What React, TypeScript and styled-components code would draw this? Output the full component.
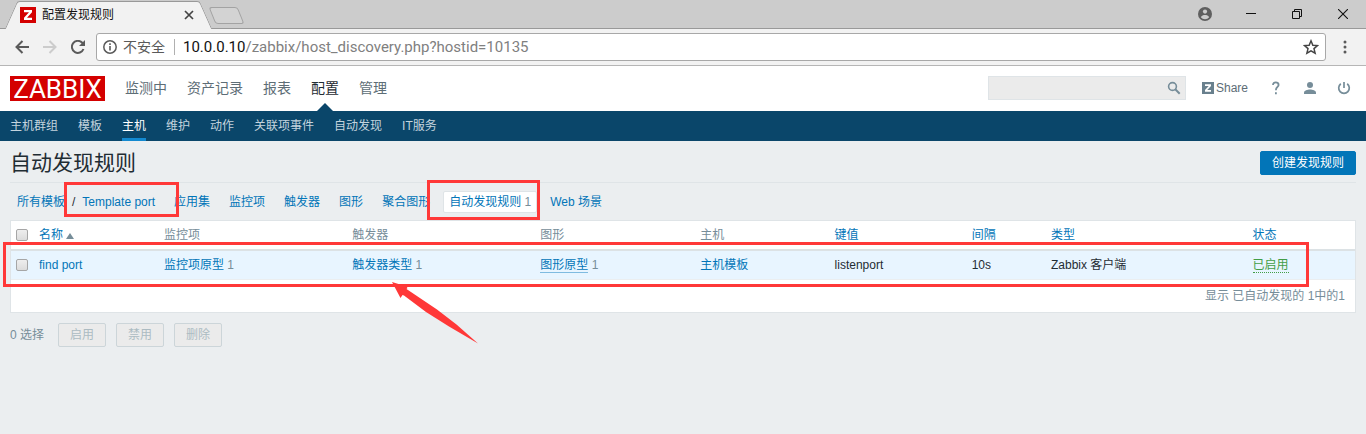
import React from "react";
import styled, { createGlobalStyle, css } from "styled-components";

const GlobalStyle = createGlobalStyle`
  * { box-sizing: border-box; }
  html { background: #ebeef0; }
  body {
    margin: 0;
    color: #1f2c33;
    font: 12px/16px "Liberation Sans", "Noto Sans CJK SC", sans-serif;
  }
  a { color: #0275b8; text-decoration: none; }
  button, input { font: inherit; }
  ul { list-style: none; margin: 0; padding: 0; }
`;

const Screen = styled.div`
  position: relative;
`;

/* ---- browser window ---- */

const TabStrip = styled.div`
  display: flex;
  align-items: flex-end;
  height: 29px;
  padding-left: 11px;
  background: #ccc;
  border-bottom: 1px solid #999;
`;

const BrowserTab = styled.div`
  position: relative;
  z-index: 0;
  display: flex;
  align-items: center;
  width: 195px;
  height: 28px;
  margin-bottom: -1px;
  padding: 0 12px 0 9px;
  color: #111;

  &::before,
  &::after {
    content: "";
    position: absolute;
    z-index: -1;
    top: 0;
    bottom: 0;
    width: 60%;
    background: #f2f2f2;
    border-top: 1px solid #999;
  }
  &::before {
    left: 0;
    border-left: 1px solid #999;
    border-top-left-radius: 3px;
    transform: skewX(-24deg);
  }
  &::after {
    right: 0;
    border-right: 1px solid #999;
    border-top-right-radius: 3px;
    transform: skewX(24deg);
  }
`;

const TabTitle = styled.span`
  flex: 1;
  margin-left: 6px;
`;

const PlainButton = styled.button`
  display: flex;
  align-items: center;
  justify-content: center;
  padding: 0;
  border: 0;
  background: none;
  color: inherit;
`;

const NewTab = styled.button`
  width: 29px;
  height: 17px;
  margin: 0 0 4px 6px;
  padding: 0;
  border: 1px solid #a3a3a3;
  border-radius: 3px;
  background: #d3d3d3;
  transform: skewX(22deg);
`;

const WindowControls = styled.div`
  display: flex;
  align-self: stretch;
  align-items: center;
  margin-left: auto;
  color: #111;

  button { width: 46px; height: 26px; }
`;

const Toolbar = styled.div`
  display: flex;
  align-items: center;
  height: 37px;
  padding: 0 14px 0 13px;
  background: #f2f2f2;
  border-bottom: 1px solid #b6b6b6;
  color: #5a5a5a;
`;

const NavButtons = styled.div`
  display: flex;
  gap: 10px;
  margin-right: 9px;

  button { width: 18px; }
  button:disabled { color: #ccc; }
`;

const AddressBar = styled.div`
  flex: 1;
  display: flex;
  align-items: center;
  height: 28px;
  margin-right: 12px;
  padding: 0 6px;
  border: 1px solid #a8a8a8;
  border-radius: 3px;
  background: #fff;
  font: 14px/18px Roboto, "Noto Sans CJK SC", sans-serif;
`;

const Security = styled.span`
  margin: 0 8px 0 6px;
  padding-right: 9px;
  border-right: 1px solid #b0b0b0;
  line-height: 16px;
`;

const Url = styled.div`
  flex: 1;
  color: #808080;
  font-size: 15px;

  b { color: #111; font-weight: 400; }
`;

const MenuButton = styled(PlainButton)`
  width: 14px;
`;

/* ---- page header ---- */

const Header = styled.header`
  display: flex;
  align-items: center;
  height: 45px;
  padding: 0 10px;
  background: #fff;
`;

const Logo = styled.a`
  width: 95px;
  height: 25px;
  background: #d40000;
  color: #fff;
  font-family: Roboto, sans-serif;
  font-size: 26px;
  line-height: 26px;
  text-align: center;
`;

const MainMenu = styled.ul`
  display: flex;
  gap: 20px;
  margin-left: 20px;
  align-self: stretch;
  font-size: 14px;
`;

const MainItem = styled.li<{ $active?: boolean }>`
  position: relative;
  line-height: 44px;

  a { color: ${(p) => (p.$active ? "#1f2c33" : "#5d6d76")}; }

  ${(p) =>
    p.$active &&
    css`
      &::after {
        content: "";
        position: absolute;
        left: 50%;
        bottom: 0;
        margin-left: -8px;
        border: 8px solid transparent;
        border-top: 0;
        border-bottom-color: #0a466a;
      }
    `}
`;

const HeaderTools = styled.div`
  display: flex;
  align-self: stretch;
  align-items: center;
  margin-left: auto;
  padding-bottom: 1px;
  color: #768d99;
`;

const SearchForm = styled.form`
  display: flex;
  align-items: center;
  width: 198px;
  height: 24px;
  margin-right: 16px;
  padding-right: 4px;
  border: 1px solid #dfe4e7;
  background: #ebebeb;
  color: #768d99;

  input {
    flex: 1;
    min-width: 0;
    height: 22px;
    border: 0;
    background: none;
  }
`;

const ShareLink = styled.a`
  display: flex;
  align-items: center;
  gap: 2px;
  margin-right: 19px;
  color: #5d6d76;
`;

const ToolLinks = styled.div`
  display: flex;
  align-items: center;
  gap: 16px;
  margin-right: 3px;
`;

const ToolLink = styled.a`
  display: flex;
  justify-content: center;
  width: 18px;
  color: #768d99;
`;

const SubMenu = styled.ul`
  display: flex;
  gap: 20px;
  height: 30px;
  padding: 0 10px;
  background: #0a466a;
`;

const SubItem = styled.li<{ $active?: boolean }>`
  border-bottom: 3px solid ${(p) => (p.$active ? "#1389d0" : "transparent")};
  line-height: 30px;

  a { color: ${(p) => (p.$active ? "#fff" : "#c4d4de")}; }
`;

/* ---- page body ---- */

const Page = styled.main`
  padding: 0 10px;
`;

const TitleRow = styled.div`
  display: flex;
  align-items: center;
  justify-content: space-between;
  height: 42px;
  padding-top: 2px;
  border-bottom: 1px solid #dfe4e7;

  h1 {
    margin: 0;
    font-size: 21px;
    font-weight: 400;
    line-height: 28px;
  }
`;

const Button = styled.button`
  height: 24px;
  padding: 0 11px;
  border: 1px solid #0275b8;
  border-radius: 2px;
  background: #0275b8;
  color: #fff;
  line-height: 22px;

  &:disabled {
    border-color: #ccd5d9;
    background: #ebebeb;
    color: #acbbc2;
  }
`;

const Filters = styled.nav`
  display: flex;
  align-items: center;
  gap: 7px;
  height: 37px;
  padding-left: 1px;
`;

const Crumbs = styled.span`
  display: flex;
  gap: 7px;
  padding: 0 6px;
`;

const Filter = styled.span<{ $active?: boolean }>`
  padding: 2px 5px;
  border: 1px solid ${(p) => (p.$active ? "#dfe4e7" : "transparent")};
  border-radius: 2px;
  background: ${(p) => (p.$active ? "#fff" : "none")};
  color: #768d99;
`;

const Count = styled.span`
  color: #768d99;
`;

const DataTable = styled.table`
  width: 100%;
  table-layout: fixed;
  border: 1px solid #dfe4e7;
  border-spacing: 0;
  background: #fff;

  th, td {
    height: 28px;
    padding: 0 5px;
    text-align: left;
    font-weight: 400;
    white-space: nowrap;
  }
  th {
    height: 30px;
    border-bottom: 2px solid #dce2e5;
    color: #768d99;
  }
  tbody td {
    height: 29px;
    border-bottom: 1px solid #ebeef0;
    background: #e8f5ff;
  }
  tfoot td {
    height: 32px;
    padding-right: 10px;
    text-align: right;
    color: #768d99;
  }
`;

const Check = styled.input.attrs({ type: "checkbox" })`
  appearance: none;
  display: block;
  width: 12px;
  height: 12px;
  margin: 0;
  border: 1px solid #a6a6a6;
  border-radius: 2px;
  background: linear-gradient(#eee, #dcdcdc);
`;

const SortArrow = styled.span`
  display: inline-block;
  margin-left: 3px;
  border: 4px solid transparent;
  border-top: 0;
  border-bottom: 6px solid #768d99;
`;

const HoverLink = styled.a`
  border-bottom: 1px solid #7fbbe0;
`;

const StatusLink = styled.a`
  border-bottom: 1px dotted #429e47;
  color: #429e47;
`;

const ActionRow = styled.div`
  display: flex;
  align-items: center;
  gap: 10px;
  padding: 10px 0;
  color: #768d99;

  span { margin-right: 4px; }
`;

/* ---- red annotations lying over the page ---- */

const Mark = styled.div`
  position: absolute;
  border: 3px solid #ff3838;
  pointer-events: none;
`;
const CrumbMark = styled(Mark)`
  left: 64px;
  top: 182px;
  width: 115px;
  height: 35px;
`;
const FilterMark = styled(Mark)`
  left: 427px;
  top: 180px;
  width: 113px;
  height: 40px;
`;
const RowMark = styled(Mark)`
  left: 3px;
  right: 57px;
  top: 242px;
  height: 45px;
`;
const Arrow = styled.svg`
  position: absolute;
  left: 392px;
  top: 282px;
  pointer-events: none;
`;

const columns = [
  { label: "监控项", width: "14%" },
  { label: "触发器", width: "14%" },
  { label: "图形", width: "11.9%" },
  { label: "主机", width: "10%" },
  { label: "键值", width: "10.2%", sortable: true },
  { label: "间隔", width: "5.9%", sortable: true },
  { label: "类型", width: "15%", sortable: true },
  { label: "状态", width: "auto", sortable: true },
];
const mainMenu = ["监测中", "资产记录", "报表", "配置", "管理"];
const subMenu = ["主机群组", "模板", "主机", "维护", "动作", "关联项事件", "自动发现", "IT服务"];
const filters = ["应用集", "监控项", "触发器", "图形", "聚合图形"];

const ZIcon = ({ size, color }: { size: number; color: string }) => (
  <svg width={size} height={size} viewBox="0 0 16 16" aria-hidden="true">
    <path fill={color} d="M0 0h16v16H0z" />
    <path fill="#fff" d="M4 3h8v2.2L7 10.8h5V13H4v-2.2l5-5.6H4z" />
  </svg>
);

const Browser = () => (
  <>
    <TabStrip>
      <BrowserTab>
        <ZIcon size={16} color="#d40000" />
        <TabTitle>配置发现规则</TabTitle>
        <PlainButton aria-label="关闭标签页">
          <svg width="10" height="10" viewBox="0 0 10 10" stroke="#444" strokeWidth="1.7">
            <path d="M1 1l8 8M9 1L1 9" />
          </svg>
        </PlainButton>
      </BrowserTab>
      <NewTab aria-label="新标签页" />
      <WindowControls>
        <PlainButton aria-label="用户">
          <svg width="14" height="14" viewBox="0 0 14 14">
            <circle cx="7" cy="7" r="7" fill="#5f5f5f" />
            <circle cx="7" cy="4.6" r="2.1" fill="#ccc" />
            <path d="M2.8 10.2C3.4 8.6 5.5 8 7 8s3.6.6 4.2 2.2A5.3 5.3 0 0 1 7 12.3a5.3 5.3 0 0 1-4.2-2.1z" fill="#ccc" />
          </svg>
        </PlainButton>
        <PlainButton aria-label="最小化">
          <svg width="10" height="10" viewBox="0 0 10 10" fill="none" stroke="currentColor">
            <path d="M0 4.5h10" />
          </svg>
        </PlainButton>
        <PlainButton aria-label="还原">
          <svg width="10" height="10" viewBox="0 0 10 10" fill="none" stroke="currentColor">
            <path d="M.5 2.5h7v7h-7zM2.5 2.5v-2h7v7h-2" />
          </svg>
        </PlainButton>
        <PlainButton aria-label="关闭">
          <svg width="10" height="10" viewBox="0 0 10 10" fill="none" stroke="currentColor" strokeWidth="1.1">
            <path d="M0 0l10 10M10 0L0 10" />
          </svg>
        </PlainButton>
      </WindowControls>
    </TabStrip>
    <Toolbar>
      <NavButtons>
        <PlainButton aria-label="后退">
          <svg width="14" height="14" viewBox="0 0 14 14" fill="none" stroke="currentColor" strokeWidth="2">
            <path d="M14 7H1.5M7.5 1L1.5 7l6 6" />
          </svg>
        </PlainButton>
        <PlainButton aria-label="前进" disabled>
          <svg width="14" height="14" viewBox="0 0 14 14" fill="none" stroke="currentColor" strokeWidth="2">
            <path d="M0 7h12.5M6.5 1l6 6-6 6" />
          </svg>
        </PlainButton>
        <PlainButton aria-label="重新加载">
          <svg width="14" height="14" viewBox="0 0 14 14" fill="none" stroke="currentColor" strokeWidth="2">
            <path d="M12.5 9A6 6 0 1 1 11.3 2.8L12 3.5" />
            <path d="M14 0v6H8z" fill="currentColor" stroke="none" />
          </svg>
        </PlainButton>
      </NavButtons>
      <AddressBar>
        <svg width="14" height="14" viewBox="0 0 14 14" fill="none" stroke="currentColor">
          <circle cx="7" cy="7" r="6.2" strokeWidth="1.5" />
          <path d="M7 6v4.5M7 3.3v1.6" strokeWidth="1.6" />
        </svg>
        <Security>不安全</Security>
        <Url>
          <b>10.0.0.10</b>/zabbix/host_discovery.php?hostid=10135
        </Url>
        <PlainButton aria-label="收藏">
          <svg width="16" height="16" viewBox="0 0 14 14" fill="none" stroke="#444" strokeWidth="1.3">
            <path d="M7 1.6l1.6 3.8 4.1.3-3.1 2.7 1 4L7 10.3l-3.6 2.1 1-4-3.1-2.7 4.1-.3z" />
          </svg>
        </PlainButton>
      </AddressBar>
      <MenuButton aria-label="菜单">
        <svg width="4" height="14" viewBox="0 0 4 14" fill="#5a5a5a">
          <circle cx="2" cy="2" r="1.5" />
          <circle cx="2" cy="7" r="1.5" />
          <circle cx="2" cy="12" r="1.5" />
        </svg>
      </MenuButton>
    </Toolbar>
  </>
);

const SiteHeader = () => (
  <>
    <Header>
      <Logo href="#">ZABBIX</Logo>
      <MainMenu>
        {mainMenu.map((m) => (
          <MainItem key={m} $active={m === "配置"}>
            <a href="#">{m}</a>
          </MainItem>
        ))}
      </MainMenu>
      <HeaderTools>
        <SearchForm>
          <input type="text" aria-label="搜索" />
          <PlainButton type="button" aria-label="搜索">
            <svg width="14" height="14" viewBox="0 0 14 14" fill="none" stroke="currentColor">
              <circle cx="5.5" cy="5.5" r="3.9" strokeWidth="1.6" />
              <path d="M8.3 8.3l4.4 4.4" strokeWidth="2" />
            </svg>
          </PlainButton>
        </SearchForm>
        <ShareLink href="#">
          <ZIcon size={12} color="#69808d" />
          Share
        </ShareLink>
        <ToolLinks>
          <ToolLink href="#" aria-label="帮助">
            <svg width="8" height="14" viewBox="0 0 8 14" fill="none" stroke="currentColor" strokeWidth="1.8">
              <path d="M1 4C1 2 2.2 1.4 3.8 1.4S6.6 2.2 6.6 3.9C6.6 6 3.9 6 3.9 9.2M3.9 11.2v2" />
            </svg>
          </ToolLink>
          <ToolLink href="#" aria-label="用户资料">
            <svg width="12" height="12" viewBox="0 0 12 12" fill="currentColor">
              <circle cx="6" cy="3" r="3" />
              <path d="M0 12v-1.5C0 8.5 3.5 7.5 6 7.5s6 1 6 3V12z" />
            </svg>
          </ToolLink>
          <ToolLink href="#" aria-label="退出">
            <svg width="14" height="14" viewBox="0 0 14 14" fill="none" stroke="currentColor" strokeWidth="1.7">
              <path d="M7 1v6M3.8 2.8a5.3 5.3 0 1 0 6.4 0" />
            </svg>
          </ToolLink>
        </ToolLinks>
      </HeaderTools>
    </Header>
    <SubMenu>
      {subMenu.map((m) => (
        <SubItem key={m} $active={m === "主机"}>
          <a href="#">{m}</a>
        </SubItem>
      ))}
    </SubMenu>
  </>
);

const RulesTable = () => (
  <DataTable>
    <colgroup>
      <col style={{ width: 23 }} />
      <col style={{ width: "9.3%" }} />
      {columns.map((c) => (
        <col key={c.label} style={{ width: c.width }} />
      ))}
    </colgroup>
    <thead>
      <tr>
        <th>
          <Check aria-label="全选" />
        </th>
        <th>
          <a href="#">
            名称
            <SortArrow />
          </a>
        </th>
        {columns.map((c) => (
          <th key={c.label}>{c.sortable ? <a href="#">{c.label}</a> : c.label}</th>
        ))}
      </tr>
    </thead>
    <tbody>
      <tr>
        <td>
          <Check aria-label="find port" />
        </td>
        <td>
          <a href="#">find port</a>
        </td>
        <td>
          <a href="#">监控项原型</a> <Count>1</Count>
        </td>
        <td>
          <a href="#">触发器类型</a> <Count>1</Count>
        </td>
        <td>
          <HoverLink href="#">图形原型</HoverLink> <Count>1</Count>
        </td>
        <td>
          <a href="#">主机模板</a>
        </td>
        <td>listenport</td>
        <td>10s</td>
        <td>Zabbix 客户端</td>
        <td>
          <StatusLink href="#">已启用</StatusLink>
        </td>
      </tr>
    </tbody>
    <tfoot>
      <tr>
        <td colSpan={10}>显示 已自动发现的 1中的1</td>
      </tr>
    </tfoot>
  </DataTable>
);

export default function App() {
  return (
    <Screen>
      <GlobalStyle />
      <Browser />
      <SiteHeader />
      <Page>
        <TitleRow>
          <h1>自动发现规则</h1>
          <Button>创建发现规则</Button>
        </TitleRow>
        <Filters>
          <Crumbs>
            <a href="#">所有模板</a>
            <span>/</span>
            <a href="#">Template port</a>
          </Crumbs>
          {filters.map((f) => (
            <Filter key={f}>
              <a href="#">{f}</a>
            </Filter>
          ))}
          <Filter $active>
            <a href="#">自动发现规则</a> 1
          </Filter>
          <Filter>
            <a href="#">Web 场景</a>
          </Filter>
        </Filters>
        <RulesTable />
        <ActionRow>
          <span>0 选择</span>
          <Button disabled>启用</Button>
          <Button disabled>禁用</Button>
          <Button disabled>删除</Button>
        </ActionRow>
      </Page>
      <CrumbMark />
      <FilterMark />
      <RowMark />
      <Arrow width="87" height="62" viewBox="0 0 87 62" aria-hidden="true">
        <path
          fill="#ff3838"
          d="M0 0l14.500 4.500 1 1.500-1 1L45 27.500l19.500 15L86 61.500 57 44.500 34 30 12 13.500 10.500 13 8.500 16z"
        />
      </Arrow>
    </Screen>
  );
}
